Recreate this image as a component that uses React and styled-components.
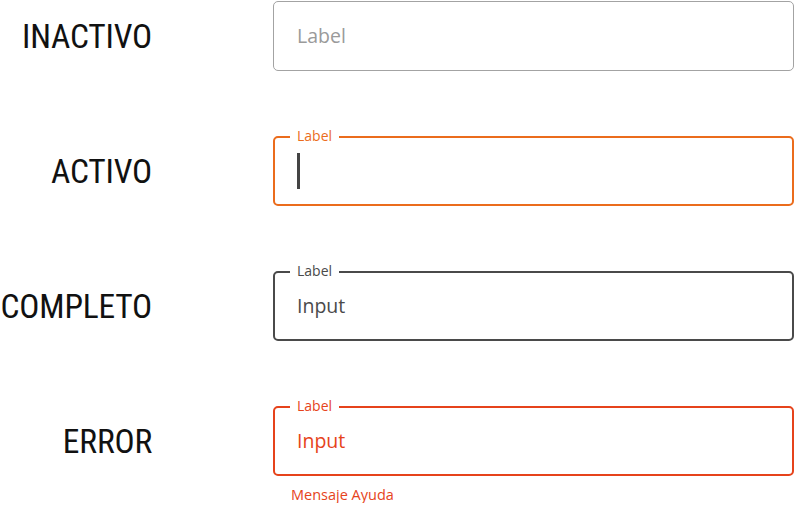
import React from "react";
import styled, { createGlobalStyle } from "styled-components";

const GlobalStyle = createGlobalStyle`
  html, body { margin: 0; padding: 0; background: #ffffff; }
  body { font-family: "Open Sans", "Noto Sans", sans-serif; }
`;

const colors = {
  inactive: { border: "#a3a3a3", text: "#9a9a9a", label: "#9a9a9a", width: 1 },
  active: { border: "#eb6c1c", text: "#4a4a4a", label: "#eb6c1c", width: 2 },
  complete: { border: "#4a4a4a", text: "#4a4a4a", label: "#4a4a4a", width: 2 },
  error: { border: "#e6431b", text: "#e6431b", label: "#e6431b", width: 2 },
};

const Page = styled.div`
  display: grid;
  grid-template-columns: 152px 521px;
  column-gap: 121px;
  row-gap: 65px;
  padding-top: 1px;
  align-items: start;
`;

const StateName = styled.div`
  height: 70px;
  display: flex;
  align-items: center;
  justify-content: flex-end;
  font-family: Roboto, "Open Sans", sans-serif;
  font-stretch: condensed;
  font-size: 33.5px;
  letter-spacing: -0.2px;
  font-weight: 400;
  color: #111111;
  white-space: nowrap;
`;

const FieldGroup = styled.div`
  display: flex;
  flex-direction: column;
`;

const Field = styled.div`
  position: relative;
  box-sizing: border-box;
  height: 70px;
  display: flex;
  align-items: center;
  padding-left: ${(p) => 24 - colors[p.$state].width}px;
  border: ${(p) => colors[p.$state].width}px solid ${(p) => colors[p.$state].border};
  border-radius: 5px;
  background: #ffffff;
`;

const FloatLabel = styled.span`
  position: absolute;
  left: 15px;
  top: -9px;
  padding: 0 7px 0 7px;
  background: #ffffff;
  font-family: "Open Sans", sans-serif;
  font-size: 14px;
  line-height: 14px;
  color: ${(p) => colors[p.$state].label};
`;

const Value = styled.span`
  font-family: "Open Sans", sans-serif;
  font-size: 19.5px;
  line-height: 24px;
  color: ${(p) => colors[p.$state].text};
`;

const Caret = styled.span`
  display: block;
  width: 3px;
  height: 36px;
  background: #444444;
`;

const Helper = styled.div`
  margin-top: 10px;
  padding-left: 18px;
  font-family: "Open Sans", sans-serif;
  font-size: 14.5px;
  line-height: 17px;
  color: #e6431b;
`;

const rows = [
  { name: "INACTIVO", state: "inactive" },
  { name: "ACTIVO", state: "active" },
  { name: "COMPLETO", state: "complete" },
  { name: "ERROR", state: "error", helper: "Mensaje Ayuda" },
];

function InputField({ state, helper }) {
  return (
    <FieldGroup>
      <Field $state={state}>
        {state !== "inactive" && <FloatLabel $state={state}>Label</FloatLabel>}
        {state === "inactive" && <Value $state={state}>Label</Value>}
        {state === "active" && <Caret />}
        {(state === "complete" || state === "error") && <Value $state={state}>Input</Value>}
      </Field>
      {helper && <Helper>{helper}</Helper>}
    </FieldGroup>
  );
}

export default function App() {
  return (
    <>
      <GlobalStyle />
      <Page>
        {rows.map((r) => (
          <React.Fragment key={r.name}>
            <StateName>{r.name}</StateName>
            <InputField state={r.state} helper={r.helper} />
          </React.Fragment>
        ))}
      </Page>
    </>
  );
}
